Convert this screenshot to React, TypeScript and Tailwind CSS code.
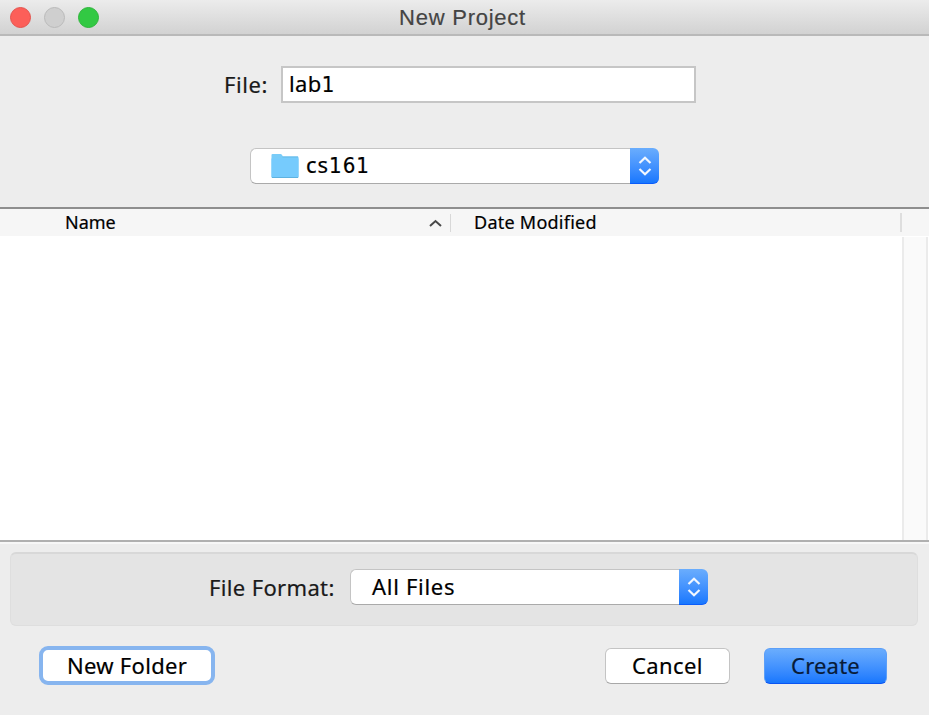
import React from "react";

const lucida = "font-['Noto_Sans','Open_Sans',sans-serif]";
const digits = "font-['DejaVu_Sans_Condensed','DejaVu_Sans',sans-serif]";

function Stepper({ className }: { className: string }) {
  return (
    <div
      className={`flex h-9 shrink-0 items-center justify-center rounded-r-[6px] border-b border-[#0b5cfa] bg-linear-to-b from-[#6aadfd] to-[#1777fe] ${className}`}
    >
      <svg width="14" height="20" viewBox="0 0 14 20" fill="none" stroke="#f2f7ff" strokeWidth="2.2">
        <path d="M1.5 7 7 1.8 12.5 7" />
        <path d="M1.5 13 7 18.2 12.5 13" />
      </svg>
    </div>
  );
}

function FolderIcon() {
  return (
    <svg width="28" height="26" viewBox="0 0 28 26" className="shrink-0">
      <path d="M.5 2Q.5 1 1.5 1H9.5Q10.500 1 11 2L12 3.5H26.500Q27.500 3.500 27.500 4.500V24.500H.5Z" fill="#79ccf8" />
      <path d="M.5 5.500H27.500V23.500Q27.500 24.500 26.500 24.500H1.500Q.5 24.500 .5 23.500Z" fill="#76cbfd" />
      <path d="M11.500 4H27" stroke="#65b9e9" />
      <path d="M1 24.500H27" stroke="#5eb2e0" />
    </svg>
  );
}

export default function App() {
  return (
    <div className={`flex h-[715px] w-[929px] flex-col overflow-hidden bg-[#ededed] text-[22px] leading-none text-[#1a1a1a] [-webkit-text-stroke:0.2px] ${lucida}`}>
      <header className="grid h-[36px] shrink-0 grid-cols-[1fr_auto_1fr] items-center border-b-2 border-[#b9b9b9] bg-linear-to-b from-[#ececec] to-[#d2d2d2]">
        <div className="flex gap-[13px] pl-[10px]">
          <span className="size-[21px] rounded-full border border-[#e4534d] bg-[#fc5f59]" />
          <span className="size-[21px] rounded-full border border-[#bababa] bg-[#cfcfcf]" />
          <span className="size-[21px] rounded-full border border-[#2db53a] bg-[#32c943]" />
        </div>
        <h1 className="pt-[1px] pr-[4px] font-['Liberation_Sans',Arial,sans-serif] text-[22px] tracking-[0.75px] text-[#444]">New Project</h1>
      </header>

      <section className="flex h-[171px] shrink-0 flex-col">
        <div className="mt-[30px] flex h-[37px] items-center pl-[224px]">
          <label className="w-[57px] pb-px tracking-[0.6px]">File:</label>
          <div className="flex h-[37px] w-[415px] items-center border-2 border-[#c6c6c6] bg-white pb-px pl-[6px] text-black">
            <span className="tracking-[0.4px]">
              lab<span className={digits}>1</span>
            </span>
          </div>
        </div>
        <div className="mt-[45px] ml-[250px] flex h-9 w-[409px]">
          <div className="flex flex-1 items-center rounded-l-[6px] border border-r-0 border-[#c4c4c4] border-b-[#aaa] bg-white pl-[20px] text-black">
            <FolderIcon />
            <span className="mb-[3px] ml-[7px] tracking-[1px]">
              cs<span className={digits}>161</span>
            </span>
          </div>
          <Stepper className="w-[29px]" />
        </div>
      </section>

      <section className="flex h-[335px] shrink-0 flex-col border-y-2 border-t-[#8e8e8e] border-b-[#b0b0b0] bg-white">
        <div className="flex h-[27px] shrink-0 items-center bg-[#f6f6f6] text-[18px] text-black">
          <span className="w-[363px] pb-[2px] pl-[65px]">Name</span>
          <div className="flex w-[88px] items-center justify-end">
            <svg width="13" height="8" viewBox="0 0 13 8" fill="none" stroke="#484848" strokeWidth="2" className="mr-[8px]">
              <path d="M1 7 6.500 2 12 7" />
            </svg>
            <span className="h-[18px] w-px bg-[#d8d8d8]" />
          </div>
          <span className="w-[449px] pb-[2px] pl-[23px] tracking-[0.25px]">Date Modified</span>
          <span className="h-[19px] w-[2px] bg-[#dedede]" />
        </div>
        <div className="flex flex-1 justify-end pt-px">
          <div className="w-[26px] border-x-2 border-[#ebebeb] bg-[#fafafa]" />
          <div className="w-px" />
        </div>
      </section>

      <footer className="flex flex-1 flex-col border-t-2 border-[#f7f7f7]">
        <div className="mt-[8px] ml-[10px] flex h-[74px] w-[908px] items-center rounded-[6px] border border-t-2 border-[#dedede] border-t-[#d8d8d8] bg-[#e4e4e4] pb-[2px] pl-[198px]">
          <span className="mb-[3px] w-[141px] tracking-[0.35px]">File Format:</span>
          <div className="mb-[3px] flex h-9 w-[358px]">
            <div className="flex flex-1 items-center rounded-l-[6px] border border-r-0 border-[#c4c4c4] border-b-[#aaa] bg-white pb-[3px] pl-[21px] text-black">
              <span className="tracking-[0.7px]">All Files</span>
            </div>
            <Stepper className="w-[29px]" />
          </div>
        </div>
        <div className="mt-[20px] flex items-center pl-[39px]">
          <button className="h-[39px] w-[176px] rounded-[9px] border-4 border-[#87b5ef] bg-white pb-px leading-none tracking-[0.3px] text-black">New Folder</button>
          <button className="ml-[390px] h-[36px] w-[125px] rounded-[6px] border border-[#c4c4c4] border-b-[#a8a8a8] bg-white pb-px leading-none tracking-[0.4px] text-black">Cancel</button>
          <button className="ml-[34px] h-[36px] w-[123px] rounded-[6px] border border-[#5c9ff8] border-b-[#0b55f2] bg-linear-to-b from-[#6aadfd] to-[#1777fe] pb-px leading-none tracking-[0.2px] text-[#081b38]">Create</button>
        </div>
      </footer>
    </div>
  );
}
